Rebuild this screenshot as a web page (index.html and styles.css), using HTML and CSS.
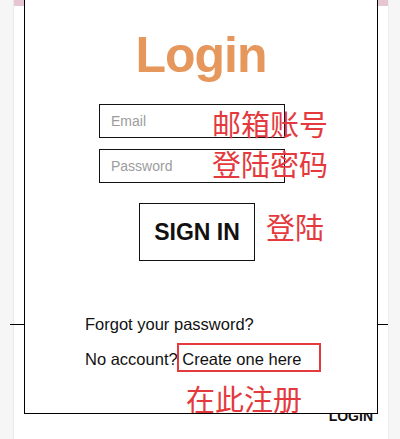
FILE: index.html
```html
<!DOCTYPE html>
<html lang="en">
<head>
<meta charset="utf-8">
<title>Login</title>
<link rel="stylesheet" href="styles.css">
</head>
<body>
<div class="page">
  <div class="topbar"></div>
  <div class="header"></div>
  <div class="footer"><span class="footer-link">LOGIN</span></div>
</div>

<div class="modal">
  <h1 class="title">Login</h1>
  <form class="form">
    <input class="field" type="email" placeholder="Email">
    <input class="field" type="password" placeholder="Password">
    <button class="signin" type="button">SIGN IN</button>
  </form>
  <div class="links">
    <p class="line">Forgot your password?</p>
    <p class="line">No account? <span class="create">Create one here</span></p>
  </div>
  <span class="note note-email">邮箱账号</span>
  <span class="note note-pass">登陆密码</span>
  <span class="note note-sign">登陆</span>
  <span class="note note-reg">在此注册</span>
</div>
</body>
</html>
```

FILE: styles.css
```css
html, body {
  margin: 0;
  padding: 0;
}
body {
  position: relative;
  width: 400px;
  height: 439px;
  overflow: hidden;
  background: #f6f6f6;
  font-family: "Liberation Sans", Arial, sans-serif;
  color: #111;
}
.page {
  margin-left: 13px;
  width: 376px;
  height: 439px;
  box-sizing: border-box;
  background: #fff;
  border-left: 1px solid #e9e9e9;
  border-right: 1px solid #ececec;
}
.topbar {
  height: 6px;
  background: #e6c6d3;
}
.header {
  height: 319px;
  box-sizing: border-box;
  margin-left: -4px;
  border-bottom: 1px solid #000;
}
.footer {
  display: flex;
  justify-content: flex-end;
  padding: 83px 15px 0 0;
}
.footer-link {
  font-weight: bold;
  font-size: 14px;
  line-height: 16px;
}
.modal {
  position: absolute;
  left: 24px;
  top: 0;
  width: 354px;
  height: 414px;
  box-sizing: border-box;
  background: #fff;
  border: 1px solid #000;
  border-top: none;
  padding-top: 30px;
}
.title {
  margin: 0;
  text-align: center;
  font-size: 50px;
  line-height: 50px;
  font-weight: bold;
  letter-spacing: -1px;
  color: #e6975c;
}
.form {
  display: flex;
  flex-direction: column;
  align-items: flex-start;
  gap: 11px;
  margin: 24px 0 0 0;
  padding-left: 74px;
}
.field {
  display: block;
  width: 186px;
  height: 34px;
  box-sizing: border-box;
  margin: 0;
  border: 1px solid #111;
  border-radius: 0;
  padding: 0 0 0 11px;
  font-family: "Liberation Sans", Arial, sans-serif;
  font-size: 14px;
  background: #fff;
  outline: none;
}
.field::placeholder {
  color: #9c9c9c;
}
.signin {
  margin: 9px 0 0 40px;
  width: 116px;
  height: 58px;
  box-sizing: border-box;
  border: 1px solid #111;
  border-radius: 0;
  background: #fff;
  font-family: "Liberation Sans", Arial, sans-serif;
  font-weight: bold;
  font-size: 23px;
  color: #111;
  padding: 0;
}
.links {
  display: flex;
  flex-direction: column;
  gap: 17px;
  margin: 54px 0 0 60px;
}
.line {
  margin: 0;
  font-size: 16.5px;
  line-height: 18px;
}
.create {
  position: relative;
}
.create::after {
  content: "";
  position: absolute;
  left: -5px;
  top: -7px;
  width: 144px;
  height: 29px;
  box-sizing: border-box;
  border: 2px solid #e4393d;
}
.note {
  position: absolute;
  font-family: "Noto Sans CJK SC", "Noto Sans", sans-serif;
  font-size: 29px;
  line-height: 29px;
  color: #e4393d;
  white-space: nowrap;
}
.note-email {
  left: 187px;
  top: 109px;
}
.note-pass {
  left: 187px;
  top: 149px;
}
.note-sign {
  left: 241px;
  top: 212px;
}
.note-reg {
  left: 161px;
  top: 384px;
}
```
